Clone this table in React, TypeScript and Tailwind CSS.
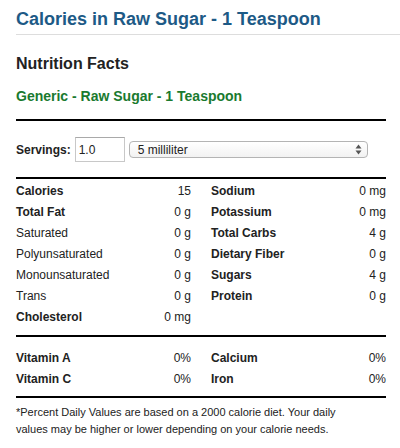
import React from "react";

const left = [
  { label: "Calories", value: "15", bold: true },
  { label: "Total Fat", value: "0 g", bold: true },
  { label: "Saturated", value: "0 g", bold: false },
  { label: "Polyunsaturated", value: "0 g", bold: false },
  { label: "Monounsaturated", value: "0 g", bold: false },
  { label: "Trans", value: "0 g", bold: false },
  { label: "Cholesterol", value: "0 mg", bold: true },
];

const right = [
  { label: "Sodium", value: "0 mg", bold: true },
  { label: "Potassium", value: "0 mg", bold: true },
  { label: "Total Carbs", value: "4 g", bold: true },
  { label: "Dietary Fiber", value: "0 g", bold: true },
  { label: "Sugars", value: "4 g", bold: true },
  { label: "Protein", value: "0 g", bold: true },
];

const vitamins = [
  [
    { label: "Vitamin A", value: "0%", bold: true },
    { label: "Vitamin C", value: "0%", bold: true },
  ],
  [
    { label: "Calcium", value: "0%", bold: true },
    { label: "Iron", value: "0%", bold: true },
  ],
];

type Row = { label: string; value: string; bold: boolean };

const Column = ({ rows }: { rows: Row[] }) => (
  <div className="flex flex-col">
    {rows.map((r) => (
      <div key={r.label} className="flex justify-between leading-[21px]">
        <span className={r.bold ? "font-bold" : ""}>{r.label}</span>
        <span>{r.value}</span>
      </div>
    ))}
  </div>
);

const Rule = ({ className = "" }: { className?: string }) => (
  <div className={`h-[2px] bg-black ${className}`} />
);

const App = () => {
  return (
    <div className="w-[400px] h-[448px] bg-white overflow-hidden pl-4 pt-2 text-[#222] font-['Liberation_Sans',Arial,sans-serif]">
      <h1 className="text-[18px] leading-[22px] font-bold text-[#1d5a86] pb-1 border-b border-[#dddddd]">
        Calories in Raw Sugar - 1 Teaspoon
      </h1>

      <div className="w-[370px]">
        <h2 className="mt-[19px] text-[16px] leading-[20px] font-bold text-[#222]">
          Nutrition Facts
        </h2>
        <h3 className="mt-[13px] text-[14px] leading-[18px] font-bold text-[#1a7a2f]">
          Generic - Raw Sugar - 1 Teaspoon
        </h3>

        <Rule className="mt-[14px]" />

        <div className="mt-[16px] flex items-center h-[25px] text-[12px]">
          <span className="font-bold">Servings:</span>
          <div className="ml-1 w-[50px] h-[25px] border border-[#c8c8c8] border-t-[#a9a9a9] flex items-center pl-[3px]">
            1.0
          </div>
          <div className="ml-1 w-[239px] h-[17px] rounded-[4px] border border-[#b4b4b4] bg-gradient-to-b from-white to-[#f2f2f2] flex items-center justify-between pl-2 pr-[5px]">
            <span>5 milliliter</span>
            <svg width="7" height="11" viewBox="0 0 7 11">
              <path d="M3.5 0.5 L6.5 4.5 L0.5 4.5 Z" fill="#555" />
              <path d="M3.5 10.5 L6.5 6.5 L0.5 6.5 Z" fill="#555" />
            </svg>
          </div>
        </div>

        <Rule className="mt-[15px]" />

        <div className="mt-[2px] grid grid-cols-2 gap-x-5 text-[12px]">
          <Column rows={left} />
          <Column rows={right} />
        </div>

        <Rule className="mt-[7px]" />

        <div className="mt-[11px] grid grid-cols-2 gap-x-5 text-[12px]">
          <Column rows={vitamins[0]} />
          <Column rows={vitamins[1]} />
        </div>

        <Rule className="mt-[6px]" />

        <p className="mt-[6px] max-w-[340px] text-[11px] leading-[17px]">
          *Percent Daily Values are based on a 2000 calorie diet. Your daily
          values may be higher or lower depending on your calorie needs.
        </p>
      </div>
    </div>
  );
};

export default App;
